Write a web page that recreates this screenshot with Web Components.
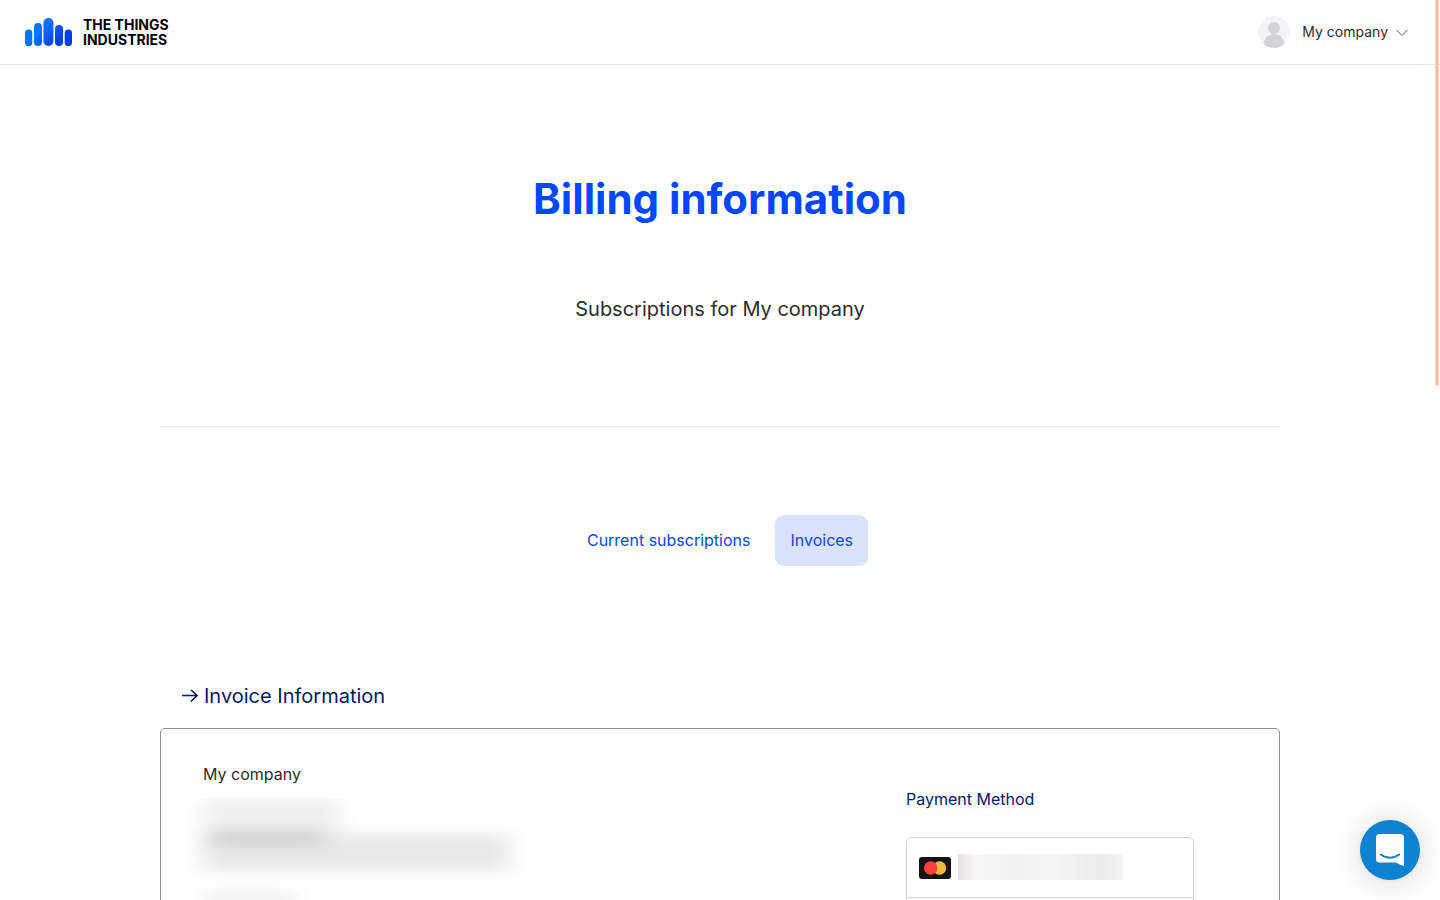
<!DOCTYPE html>
<html lang="en">
<head>
<meta charset="utf-8">
<meta name="viewport" content="width=device-width, initial-scale=1">
<title>Billing information</title>
<style>
  html { scrollbar-width: none; }
  body {
    --blue: #0047ff; --navy: #001a66; --ink: #2c2c2c; --line: #e4e4ec;
    margin: 0; background: #fff; color: var(--ink);
    font: 16px/24px Inter, "Liberation Sans", sans-serif;
  }
</style>
</head>
<body>
<billing-page></billing-page>
<script>
const define = (name, markup) => {
  const template = document.createElement('template');
  template.innerHTML = markup;
  customElements.define(name, class extends HTMLElement {
    constructor() {
      super();
      this.attachShadow({ mode: 'open' }).append(template.content.cloneNode(true));
    }
  });
};

define('brand-logo', `
<style>
  :host { display: block; }
  a { display: flex; align-items: center; gap: 11px; color: #000; text-decoration: none;
      font-size: 14px; line-height: 15px; font-weight: 700; }
  svg { display: block; }
  span { display: block; }
</style>
<a href="#">
  <svg width="47" height="28" viewBox="0 0 47 28" aria-hidden="true">
    <defs><linearGradient id="g" gradientUnits="userSpaceOnUse" x1="8" y1="2" x2="36" y2="27">
      <stop offset=".35" stop-color="#0073ff"/><stop offset=".85" stop-color="#0040e8"/>
    </linearGradient></defs>
    <g fill="url(#g)">
      <rect x="0" y="11.500" width="7.300" height="16.500" rx="3.600"/>
      <rect x="9" y="5" width="8" height="23" rx="4"/>
      <rect x="18.400" y="0" width="10" height="28" rx="5"/>
      <rect x="30" y="7" width="8" height="21" rx="4"/>
      <rect x="39.700" y="11.500" width="7.300" height="16.500" rx="3.600"/>
    </g>
  </svg>
  <div><span>THE THINGS</span><span>INDUSTRIES</span></div>
</a>`);

define('account-menu', `
<style>
  :host { display: block; }
  button { display: flex; align-items: center; border: 0; padding: 0; background: none;
    color: inherit; font: inherit; font-size: 14px; cursor: pointer; }
  .avatar { margin-right: 12px; }
  .chevron { margin-left: 8px; }
</style>
<button type="button" aria-haspopup="menu">
  <svg class="avatar" width="32" height="32" viewBox="0 0 32 32" aria-hidden="true">
    <defs><clipPath id="c"><circle cx="16" cy="16" r="16"/></clipPath></defs>
    <g clip-path="url(#c)"><rect width="32" height="32" fill="#f4f3f9"/>
    <circle cx="16" cy="12" r="6" fill="#d3d2d9"/>
    <path d="M5 30c1-8 5-12 11-12s10 4 11 12v3H5z" fill="#d3d2d9"/></g>
  </svg>
  <slot></slot>
  <svg class="chevron" width="12" height="12" viewBox="0 0 12 12" fill="none" stroke="#555" aria-hidden="true"><path d="M.5 4 6 9.500 11.500 4"/></svg>
</button>`);

define('site-header', `
<style>
  :host { display: block; border-bottom: 1px solid var(--line); }
  header { display: flex; align-items: center; justify-content: space-between;
    height: 64px; padding: 0 32px 0 25px; }
</style>
<header><brand-logo></brand-logo><account-menu>My company</account-menu></header>`);

define('page-hero', `
<style>
  :host { display: block; text-align: center; border-bottom: 1px solid var(--line); padding: 104px 0 105px; }
  h1 { margin: 0 0 68px; color: var(--blue); font-size: 42px; line-height: 60px; font-weight: 700; }
  p { margin: 0; font-size: 20px; line-height: 24px; }
</style>
<h1><slot name="title"></slot></h1>
<p><slot></slot></p>`);

define('tab-link', `
<style>
  :host { display: block; }
  a { display: block; padding: 13px 15px 14px; border-radius: 9px; color: #0b47e8; text-decoration: none; }
  :host([selected]) a { background: #d9e3ff; }
</style>
<a href="#"><slot></slot></a>`);

define('tab-nav', `
<style>
  :host { display: block; }
  nav { display: flex; justify-content: center; gap: 10px; }
</style>
<nav aria-label="Billing sections"><slot></slot></nav>`);

define('section-title', `
<style>
  :host { display: block; }
  h2 { display: flex; align-items: center; gap: 6px; margin: 0; padding: 0 21px;
    color: var(--navy); font-size: 20px; line-height: 24px; font-weight: 400; }
</style>
<h2><svg width="17" height="14" viewBox="0 0 17 14" fill="none" stroke="currentColor" stroke-width="1.600" aria-hidden="true"><path d="M1 6.500h15M10 1l6 5.500-6 6"/></svg><slot></slot></h2>`);

define('redacted-address', `
<style>
  :host { display: block; overflow: hidden; width: 331px; height: 160px; }
  svg { display: block; }
</style>
<svg width="331" height="160" aria-hidden="true">
  <defs>
    <filter id="b" x="-20%" y="-60%" width="140%" height="220%" color-interpolation-filters="sRGB"><feGaussianBlur stdDeviation="11 7"/></filter>
    <filter id="d" x="-20%" y="-150%" width="140%" height="400%" color-interpolation-filters="sRGB"><feGaussianBlur stdDeviation="10 6"/></filter>
  </defs>
  <g filter="url(#b)">
    <rect x="12" y="2" width="136" height="40" fill="#efefef"/>
    <rect x="12" y="37" width="306" height="37" fill="#e8e8e8"/>
    <rect x="12" y="94" width="92" height="36" fill="#f2f2f2"/>
  </g>
  <rect x="20" y="33" width="112" height="16" fill="#cfcfcf" opacity=".8" filter="url(#d)"/>
</svg>`);

define('payment-method', `
<style>
  :host { display: block; }
  h3 { margin: 0 0 26px; color: var(--navy); font-size: 16px; line-height: 24px; font-weight: 400; }
  .box { border: 1px solid #d2d2da; border-radius: 5px; }
  .row { display: flex; align-items: center; gap: 7px; height: 59px; padding: 0 12px;
    border-bottom: 1px solid #d2d2da; }
  .row:last-child { border: 0; }
  .mask { width: 165px; height: 26px; margin-bottom: 2px;
    background: linear-gradient(90deg, #e3e0dd, #eeedec 5%, #f7f7f7 11%, #f1f1f1 35%, #f4f4f4 58%, #ededed 80%, #ebebeb 88%, #f5f5f5); }
</style>
<h3>Payment Method</h3>
<div class="box">
  <div class="row">
    <svg width="32" height="22" viewBox="0 0 32 22" role="img" aria-label="Mastercard">
      <rect width="32" height="22" rx="3" fill="#141414"/>
      <circle cx="20.500" cy="11" r="6.700" fill="#ffb83d"/><circle cx="11.700" cy="11" r="6.700" fill="#ff4040"/>
    </svg>
    <div class="mask"></div>
  </div>
  <div class="row"></div>
</div>`);

define('invoice-card', `
<style>
  :host { display: block; border: 1px solid #8d8d8d; border-radius: 5px; }
  .grid { display: grid; grid-template-columns: 1fr 288px; padding: 33px 85px 80px 30px; }
  .name { margin: 0 0 11px; padding-left: 12px; }
  payment-method { margin-top: 25px; }
</style>
<div class="grid">
  <div><p class="name"><slot></slot></p><redacted-address></redacted-address></div>
  <payment-method></payment-method>
</div>`);

define('chat-launcher', `
<style>
  :host { position: fixed; right: 20px; bottom: 20px; display: block; }
  button { display: grid; place-items: center; width: 60px; height: 60px; padding: 0; border: 0;
    border-radius: 50%; background: #0d82d1; cursor: pointer;
    box-shadow: 0 1px 6px rgba(0,0,0,.06), 0 2px 32px rgba(0,0,0,.16); }
</style>
<button type="button" aria-label="Open chat">
  <svg width="28" height="32" viewBox="0 0 28 32" aria-hidden="true">
    <path d="M3.500 0h21A3.500 3.500 0 0 1 28 3.500V32s-4-1.200-8.400-3.600H3.500A3.500 3.500 0 0 1 0 25V3.500A3.500 3.500 0 0 1 3.500 0z" fill="#fff"/>
    <path d="M4.800 20.500c5.600 4.300 12.800 4.300 18.400 0" fill="none" stroke="#0d82d1" stroke-width="1.900" stroke-linecap="round"/>
  </svg>
</button>`);

define('scroll-indicator', `
<style>
  :host { position: fixed; top: 0; right: 1px; display: block; box-sizing: border-box;
    width: 4px; height: 386px; background: #fbb79e; border: solid #fddacd; border-width: 0 1px 1px; }
</style>`);

define('billing-page', `
<style>
  :host { display: block; }
  main { max-width: 1120px; margin: 0 auto; padding: 0 24px 80px; }
  tab-nav { margin: 88px 0 118px; }
  section-title { margin-bottom: 20px; }
</style>
<site-header></site-header>
<main>
  <page-hero><span slot="title">Billing information</span>Subscriptions for My company</page-hero>
  <tab-nav><tab-link>Current subscriptions</tab-link><tab-link selected>Invoices</tab-link></tab-nav>
  <section-title>Invoice Information</section-title>
  <invoice-card>My company</invoice-card>
</main>
<scroll-indicator></scroll-indicator>
<chat-launcher></chat-launcher>`);
</script>
</body>
</html>
